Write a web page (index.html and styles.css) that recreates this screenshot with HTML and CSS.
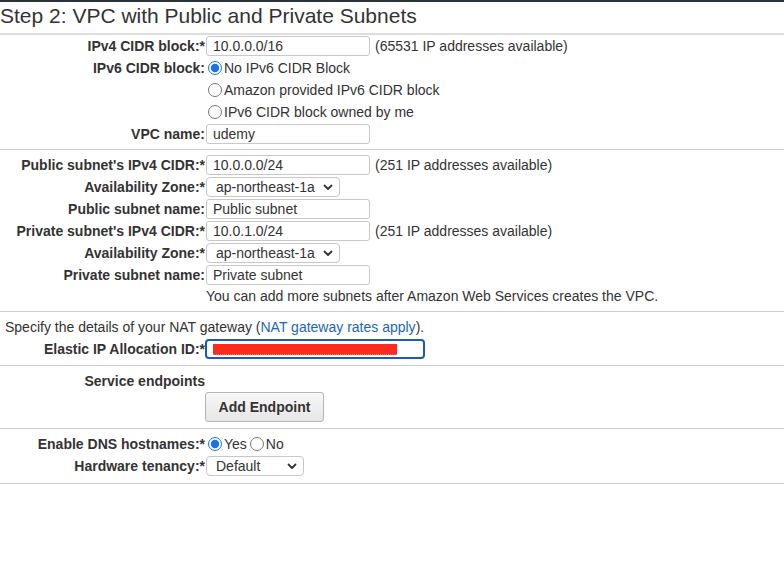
FILE: index.html
```html
<!DOCTYPE html>
<html>
<head>
<meta charset="utf-8">
<link rel="stylesheet" href="styles.css">
</head>
<body>
<div class="page">
  <h1 class="title">Step 2: VPC with Public and Private Subnets</h1>

  <div class="section first">
    <div class="row">
      <label class="label">IPv4 CIDR block:*</label>
      <div class="field"><input class="text" type="text" value="10.0.0.0/16"><span class="hint">(65531 IP addresses available)</span></div>
    </div>
    <div class="row">
      <label class="label">IPv6 CIDR block:</label>
      <div class="field"><input class="radio" type="radio" name="ipv6" checked><span>No IPv6 CIDR Block</span></div>
    </div>
    <div class="row">
      <span class="label"></span>
      <div class="field"><input class="radio" type="radio" name="ipv6"><span>Amazon provided IPv6 CIDR block</span></div>
    </div>
    <div class="row">
      <span class="label"></span>
      <div class="field"><input class="radio" type="radio" name="ipv6"><span>IPv6 CIDR block owned by me</span></div>
    </div>
    <div class="row">
      <label class="label">VPC name:</label>
      <div class="field"><input class="text" type="text" value="udemy"></div>
    </div>
  </div>

  <div class="section">
    <div class="row">
      <label class="label">Public subnet's IPv4 CIDR:*</label>
      <div class="field"><input class="text" type="text" value="10.0.0.0/24"><span class="hint">(251 IP addresses available)</span></div>
    </div>
    <div class="row">
      <label class="label">Availability Zone:*</label>
      <div class="field">
        <div class="select az"><span>ap-northeast-1a</span><svg class="chev" width="10" height="7" viewBox="0 0 10 7"><path d="M1.5 1.5 L5 5 L8.5 1.5" fill="none" stroke="#333" stroke-width="1.8" stroke-linecap="round" stroke-linejoin="round"/></svg></div>
      </div>
    </div>
    <div class="row">
      <label class="label">Public subnet name:</label>
      <div class="field"><input class="text" type="text" value="Public subnet"></div>
    </div>
    <div class="row">
      <label class="label">Private subnet's IPv4 CIDR:*</label>
      <div class="field"><input class="text" type="text" value="10.0.1.0/24"><span class="hint">(251 IP addresses available)</span></div>
    </div>
    <div class="row">
      <label class="label">Availability Zone:*</label>
      <div class="field">
        <div class="select az"><span>ap-northeast-1a</span><svg class="chev" width="10" height="7" viewBox="0 0 10 7"><path d="M1.5 1.5 L5 5 L8.5 1.5" fill="none" stroke="#333" stroke-width="1.8" stroke-linecap="round" stroke-linejoin="round"/></svg></div>
      </div>
    </div>
    <div class="row">
      <label class="label">Private subnet name:</label>
      <div class="field"><input class="text" type="text" value="Private subnet"></div>
    </div>
    <div class="row note-row">
      <span class="label"></span>
      <div class="field">You can add more subnets after Amazon Web Services creates the VPC.</div>
    </div>
  </div>

  <div class="section">
    <div class="row full">
      <div class="intro">Specify the details of your NAT gateway (<a class="link" href="#">NAT gateway rates apply</a>).</div>
    </div>
    <div class="row">
      <label class="label">Elastic IP Allocation ID:*</label>
      <div class="field"><div class="eip"><span class="redact"></span></div></div>
    </div>
  </div>

  <div class="section">
    <div class="row">
      <span class="label">Service endpoints</span>
      <div class="field"></div>
    </div>
    <div class="row btn-row">
      <span class="label"></span>
      <div class="field"><button class="btn" type="button">Add Endpoint</button></div>
    </div>
  </div>

  <div class="section last">
    <div class="row">
      <label class="label">Enable DNS hostnames:*</label>
      <div class="field"><input class="radio" type="radio" name="dns" checked><span>Yes</span><input class="radio second" type="radio" name="dns"><span>No</span></div>
    </div>
    <div class="row">
      <label class="label">Hardware tenancy:*</label>
      <div class="field">
        <div class="select tenancy"><span>Default</span><svg class="chev" width="10" height="7" viewBox="0 0 10 7"><path d="M1.5 1.5 L5 5 L8.5 1.5" fill="none" stroke="#333" stroke-width="1.8" stroke-linecap="round" stroke-linejoin="round"/></svg></div>
      </div>
    </div>
  </div>
</div>
</body>
</html>
```

FILE: styles.css
```css
html, body {
  margin: 0;
  padding: 0;
  background: #ffffff;
}

body {
  font-family: "Liberation Sans", Arial, Helvetica, sans-serif;
  font-size: 14px;
  color: #333333;
}

.page {
  border-top: 2px solid #2a323c;
}

.title {
  margin: 0;
  box-sizing: border-box;
  height: 33px;
  padding-top: 1px;
  font-size: 21px;
  font-weight: normal;
  line-height: 26px;
  color: #333333;
  border-bottom: 2px solid #dedede;
}

.section {
  padding: 4px 0 5px;
  border-bottom: 1px solid #cccccc;
}

.section.first {
  padding: 0 0 4px;
}

.section.last {
  padding-bottom: 6px;
}

.row {
  display: grid;
  grid-template-columns: 206px 1fr;
  align-items: center;
  height: 22px;
}

.row.full {
  display: block;
}

.label {
  text-align: right;
  font-weight: bold;
  padding-right: 1px;
  white-space: nowrap;
}

.field {
  display: flex;
  align-items: center;
  white-space: nowrap;
}

.text {
  box-sizing: border-box;
  width: 164px;
  height: 20px;
  margin: 0;
  padding: 0 6px;
  border: 1px solid #c8c8c8;
  border-radius: 3px;
  background: #ffffff;
  font-family: inherit;
  font-size: 14px;
  color: #333333;
  outline: none;
}

.hint {
  margin-left: 5px;
}

.radio {
  width: 14px;
  height: 14px;
  margin: 0 2px 0 2px;
  accent-color: #1a73e8;
}

.radio.second {
  margin-left: 3px;
}

.select {
  box-sizing: border-box;
  height: 20px;
  display: flex;
  align-items: center;
  justify-content: space-between;
  padding: 0 6px 0 9px;
  border: 1px solid #c8c8c8;
  border-radius: 4px;
  background: #ffffff;
}

.select.az {
  width: 134px;
}

.select.tenancy {
  width: 98px;
}

.chev {
  display: block;
}

.note-row {
  height: 20px;
}

.intro {
  padding-left: 5px;
  line-height: 22px;
}

.link {
  color: #1c66b8;
  text-decoration: none;
}

.eip {
  box-sizing: border-box;
  width: 220px;
  height: 20px;
  margin-left: -1px;
  border: 2px solid #1b5ab8;
  border-radius: 4px;
  padding: 0 0 0 6px;
  display: flex;
  align-items: center;
  background: #ffffff;
}

.redact {
  display: block;
  width: 184px;
  height: 10px;
  background: #ff2b1c;
  border-bottom: 1px dotted #ff6a5c;
  margin-top: 1px;
}

.btn-row {
  height: 31px;
  align-items: start;
}

.btn {
  box-sizing: border-box;
  width: 119px;
  height: 30px;
  margin-left: -1px;
  border: 1px solid #b5b5b5;
  border-radius: 3px;
  background: linear-gradient(#f7f7f7, #e6e6e6);
  font-family: inherit;
  font-size: 14px;
  font-weight: bold;
  color: #333333;
  padding: 0;
}
```
